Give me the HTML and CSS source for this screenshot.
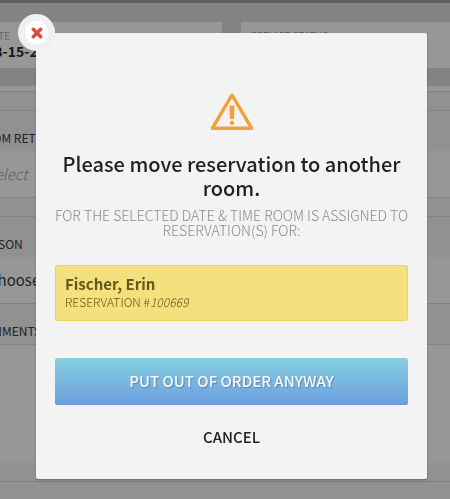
FILE: index.html
```html
<!DOCTYPE html>
<html lang="en">
<head>
  <meta charset="UTF-8">
  <meta name="viewport" content="width=device-width, initial-scale=1.0">
  <title>Room Out of Order</title>
  <link rel="stylesheet" href="styles.css">
</head>
<body>
  <main class="page">
    <div class="summary">
      <div class="summary-card">
        <span class="summary-label">DATE</span>
        <strong class="summary-value">08-15-2018</strong>
      </div>
      <div class="summary-card summary-status">
        <span class="status-label">SERVICE STATUS</span>
      </div>
    </div>

    <form class="details">
      <div class="field">
        <label for="room">ROOM RETURN</label>
        <select id="room" class="empty">
          <option>Select</option>
        </select>
      </div>
      <div class="field">
        <label for="reason">REASON</label>
        <select id="reason">
          <option>Choose</option>
        </select>
      </div>
      <div class="field comments">
        <label for="comments">COMMENTS</label>
        <textarea id="comments"></textarea>
        <div class="field-footer"></div>
      </div>
    </form>
  </main>

  <div class="overlay">
    <div class="modal" role="dialog" aria-modal="true" aria-labelledby="modalTitle">
      <button type="button" class="close" aria-label="Close">
        <svg width="12" height="12" viewBox="0 0 12 12">
          <path d="M2.3 2.3L9.7 9.7M9.7 2.3L2.3 9.7" stroke="#dc4a41" stroke-width="3.4" stroke-linecap="round"/>
        </svg>
      </button>

      <svg class="warning" width="44" height="38" viewBox="0 0 44 38" aria-hidden="true">
        <path d="M22 2.2L41.6 35.2H2.4Z" fill="none" stroke="#f0a03c" stroke-width="3.4" stroke-linejoin="round"/>
        <path d="M19.5 12.6h5l-.4 13.4h-4.2z" fill="#f0a03c"/>
        <circle cx="22" cy="29.8" r="2.2" fill="#f0a03c"/>
      </svg>

      <h1 id="modalTitle">Please move reservation to another room.</h1>
      <p class="message">FOR THE SELECTED DATE &amp; TIME ROOM IS ASSIGNED TO RESERVATION(S) FOR:</p>

      <div class="reservation">
        <strong class="guest">Fischer, Erin</strong>
        <span class="number">RESERVATION #<em>100669</em></span>
      </div>

      <button type="button" class="btn">PUT OUT OF ORDER ANYWAY</button>
      <button type="button" class="cancel">CANCEL</button>
    </div>
  </div>
</body>
</html>
```

FILE: styles.css
```css
* {
    box-sizing: border-box;
}

body {
    margin: 0;
    font-family: 'Noto Sans CJK SC', 'Noto Sans', sans-serif;
    background-color: #919191;
    color: #202225;
    overflow: hidden;
}

button,
select,
textarea {
    font-family: inherit;
    border: none;
}

/* Page behind the dialog */
.page {
    margin-left: -34px;
    border-top: 3px solid #5e5e5e;
}

.summary {
    display: grid;
    grid-template-columns: 256px 1fr;
    gap: 19px;
    padding: 19px 0 18px;
    background-color: #838383;
}

.summary-card {
    display: flex;
    flex-direction: column;
    height: 46px;
    padding: 6px 20px;
    background-color: #979797;
}

.summary-label {
    font-size: 10px;
    line-height: 15px;
    color: #666666;
}

.summary-value {
    font-size: 14px;
    line-height: 16px;
    color: #191919;
}

.summary-status {
    padding: 7px 10px;
}

.status-label {
    font-size: 10px;
    line-height: 14px;
    color: #555555;
}

.details {
    padding-top: 5px;
    background-color: #979797;
}

.field {
    display: flex;
    flex-direction: column;
    border-top: 1px solid #828282;
    padding-top: 18px;
    background-color: #919191;
}

.field label {
    height: 41px;
    padding: 17px 10px 0;
    border-top: 1px solid #848484;
    font-size: 12px;
    line-height: 20px;
    white-space: nowrap;
}

.field select {
    appearance: none;
    height: 46px;
    padding: 0 22px 2px;
    border-radius: 0;
    background-color: #979797;
    color: #202225;
    font-size: 15px;
}

.field .empty {
    padding-left: 20px;
    color: #606060;
    font-style: italic;
    font-weight: 300;
}

.comments {
    padding-top: 0;
}

.comments label {
    border-top: none;
    border-bottom: 1px solid #858585;
}

.field textarea {
    height: 118px;
    resize: none;
    background-color: #979797;
}

.field-footer {
    height: 19px;
    border-bottom: 1px solid #808080;
}

/* Dialog */
.overlay {
    position: fixed;
    inset: 0;
    padding: 33px 23px 20px 36px;
}

.modal {
    position: relative;
    display: flex;
    flex-direction: column;
    padding: 60px 19px 27px;
    border-radius: 2px;
    background-color: #f3f3f3;
    box-shadow: 0 1px 2px rgba(0, 0, 0, 0.3);
}

.close {
    position: absolute;
    top: -19px;
    left: -18px;
    display: flex;
    justify-content: center;
    align-items: center;
    width: 37px;
    height: 37px;
    padding: 0;
    border: 7px solid #f0f0f0;
    border-radius: 50%;
    background-color: #ffffff;
    cursor: pointer;
}

.warning {
    align-self: center;
}

h1 {
    margin: 21px 0 8px;
    font-size: 20px;
    font-weight: 500;
    line-height: 24px;
    text-align: center;
}

.message {
    margin: 0 -8px 27px;
    font-size: 14px;
    font-weight: 300;
    line-height: 15px;
    text-align: center;
    color: #8c8c8c;
}

.reservation {
    display: flex;
    flex-direction: column;
    padding: 8px 9px 10px;
    border: 1px solid #efd25c;
    border-radius: 2px;
    background-color: #f4e07d;
    color: #66571a;
}

.guest {
    font-size: 15px;
    line-height: 20px;
}

.number {
    font-size: 12px;
    font-weight: 300;
    line-height: 16px;
}

/* Buttons */
.btn {
    height: 47px;
    margin-top: 37px;
    padding-bottom: 4px;
    border-radius: 3px;
    background: linear-gradient(#87d0e0, #6b9fe0);
    box-shadow: inset 0 -1px 0 #6796d6;
    color: #f6f8fa;
    font-size: 15px;
    font-weight: 500;
    text-shadow: 1px 1px 1px rgba(0, 0, 0, 0.25);
    cursor: pointer;
}

.cancel {
    align-self: center;
    margin-top: 17px;
    padding: 0 10px;
    background: none;
    color: #202225;
    font-size: 15px;
    font-weight: 500;
    line-height: 30px;
    cursor: pointer;
}
```
